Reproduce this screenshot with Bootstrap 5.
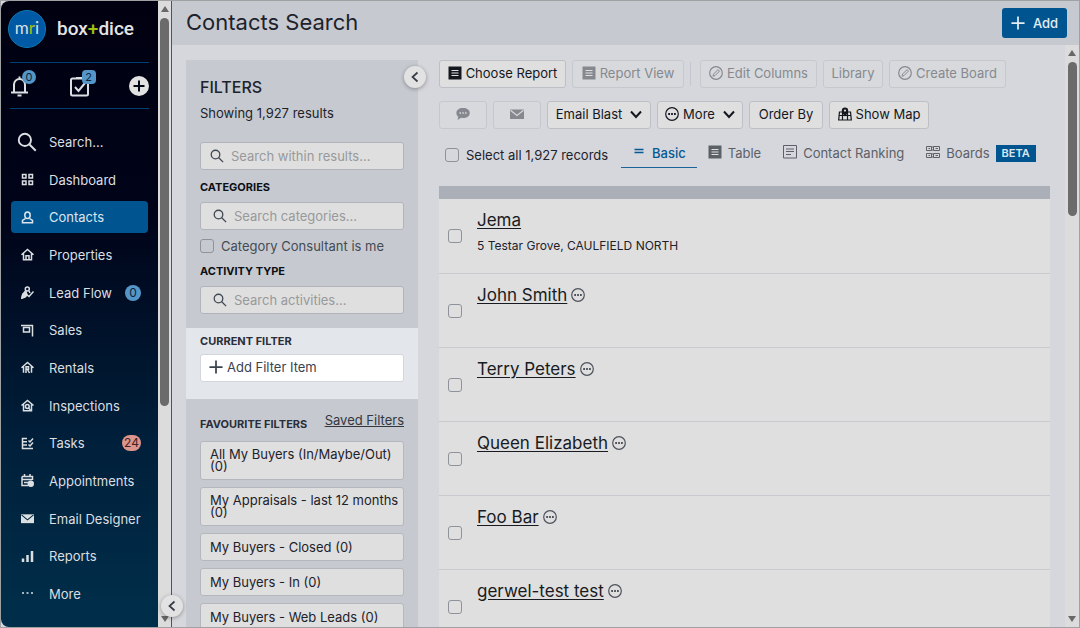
<!DOCTYPE html>
<html lang="en">
<head>
<meta charset="utf-8">
<meta name="viewport" content="width=device-width, initial-scale=1">
<title>Contacts Search</title>
<link rel="stylesheet" href="https://cdn.jsdelivr.net/npm/bootstrap@5.3.0/dist/css/bootstrap.min.css">
<style>
  :root { --brand: #005591; --ink: #1d222b; --page: #d5d7dc; --panel: #c6cad0; --field: #dfdfdf; }
  body { font-family: Inter, "Open Sans", sans-serif; font-size: 13px; line-height: 16px; color: var(--ink); background: var(--page); }
  svg { fill: none; stroke: currentColor; stroke-width: 1.5; flex: none; display: block; }
  .ico { width: 14px; height: 14px; }
  .heavy { stroke-width: 2; }
  .fine { stroke-width: 1; }
  .shell { border: 1px solid #a0a1a3; }

  /* Sidebar */
  .side { width: 157px; background: linear-gradient(#000010 0, #000419 35%, #001f3a 70%, #002f4b); color: #dcdfe2; border-radius: 8px 0 0 8px; }
  .side a { color: inherit; text-decoration: none; }
  .brand { height: 61px; padding: 0 7px 6px; gap: 11px; }
  .brand-disc { width: 38px; height: 38px; border-radius: 50%; background: #0059a5; border: 1px solid #0d79b5; font: 17px/34px Lato, sans-serif; text-align: center; }
  .brand-name { font: 500 19px/24px Roboto, sans-serif; color: #e4e4e4; }
  .lime { color: #a2bf12; }
  .quick { margin: 0 9px; height: 47px; border-top: 1px solid #003f73; border-bottom: 1px solid #003f73; }
  .quick a { position: relative; }
  .bubble { background: #5596c8; color: #0d2338; font-size: 11px; line-height: 14px; min-width: 14px; height: 14px; text-align: center; }
  .quick .bubble { position: absolute; left: 12px; top: -5px; }
  .side-menu { padding: 17px 10px; }
  .side-menu a { height: 32px; border-radius: 4px; padding: 0 7px 0 10px; }
  .side-menu a.active { background: var(--brand); color: #dde6ee; }
  .glyph { width: 28px; }
  .glyph svg { width: 13px; height: 13px; }
  .glyph .lens { width: 20px; height: 20px; margin-left: -4px; }
  .glyph .bars { stroke-width: 2.5; }
  .glyph .envelope { --fold: #00253f; }
  .side-menu .bubble { line-height: 16px; min-width: 16px; height: 16px; font-size: 12px; }
  .side-menu .alerting { background: #dc958c; color: #44201d; padding: 0 2px; }

  /* Scroll rails */
  .rail { width: 14px; background: #dcdcdc; color: #686868; padding: 5px 0; }
  .rail svg { width: 8px; height: 6px; fill: currentColor; stroke: none; }
  .rail i { width: 9px; border-radius: 5px; background: #6b6b6b; margin-top: 6px; }
  .rail-left { border-right: 1px solid #50535a; }
  .rail-left i { height: 63%; }
  .rail-right i { height: 27%; }
  .round { position: absolute; width: 22px; height: 22px; border-radius: 50%; border: 0; padding: 0; background: #e2e2e2; box-shadow: 0 1px 4px #0005; color: #363c45; z-index: 2; }
  .round svg { width: 12px; height: 12px; margin: auto; stroke-width: 1.7; }
  .round-side { right: -11px; bottom: 10px; }
  .round-panel { right: -8px; top: 6px; }

  /* Header */
  .top { height: 44px; background: var(--panel); padding: 0 12px 0 14px; }
  .top h1 { font-size: 22px; line-height: 26px; font-weight: 400; margin: 0 0 2px; }
  .btn { --bs-btn-font-size: 13px; --bs-btn-line-height: 16px; --bs-btn-border-radius: 3px; }
  .btn-add { --bs-btn-color: #e4edf4; --bs-btn-bg: var(--brand); --bs-btn-hover-bg: #00477a; --bs-btn-hover-color: #fff; --bs-btn-padding-x: 6px; font-weight: 500; width: 65px; height: 30px; }

  /* Filters */
  .filters-wrap { padding: 15px 12px 0 14px; }
  .filters { width: 232px; background: var(--panel); padding-top: 18px; }
  .filters .block { padding: 0 14px; }
  .filters .search-block { padding-bottom: 14px; }
  .filters h2 { font-size: 16px; line-height: 18px; font-weight: 500; margin: 0 0 9px; }
  .filters h3 { font-size: 11px; line-height: 14px; font-weight: 700; margin: 0; color: #0c0f14; }
  .seek { height: 28px; background: var(--field); border: 1px solid #b1b5bb; border-radius: 3px; padding: 0 9px; gap: 7px; color: #414954; }
  .seek.inset { padding-left: 12px; }
  .seek input { border: 0; outline: 0; background: none; min-width: 0; padding: 0; width: 100%; font-size: 13px; line-height: 16px; }
  .seek input::placeholder { color: #98999b; }
  .results-seek { margin: 21px 0 10px; }
  .filters .gap-under { margin-bottom: 8px; }
  .consultant { gap: 7px; margin: 8px 0 10px; color: #454b54; }
  .form-check-input { width: 14px; height: 14px; margin: 0; background-color: transparent; border: 1px solid #8e939b; border-radius: 3px !important; flex: none; }
  .filters .lit { background: #e3e6eb; height: 71px; padding-top: 6px; }
  .lit h3, .fav h3 { color: #2a2e3a; }
  .lit h3 { margin-bottom: 6px; }
  .add-item { background: #fff; border: 1px solid #d2d6da; border-radius: 3px; height: 28px; padding: 0 8px 2px; gap: 4px; color: #39434e; }
  .fav-head { height: 32px; margin-bottom: 10px; }
  .saved { color: #33383f; line-height: 14px; margin-bottom: 4px; }
  .fav-list { gap: 7px; }
  .fav-item { background: var(--field); border: 1px solid #b4b8be; border-radius: 3px; padding: 6px 4px 7px 9px; line-height: 12px; text-align: left; color: var(--ink); width: 100%; min-height: 28px; }

  /* Toolbar */
  .content { padding: 15px 15px 0 9px; }
  .tool-row { gap: 6px; }
  .second { margin-top: 13px; }
  .tool { --bs-btn-color: #14181e; --bs-btn-bg: #dfdfdf; --bs-btn-border-color: #bcc0c6; --bs-btn-disabled-color: #85898f; --bs-btn-disabled-bg: #d8d9dc; --bs-btn-disabled-border-color: #c5c8cd; --bs-btn-disabled-opacity: 1; height: 28px; padding: 3px 5px 5px; display: flex; align-items: center; justify-content: center; gap: 4px; white-space: nowrap; flex: none; }
  .tool .chev { width: 12px; height: 12px; margin-left: 4px; stroke-width: 2; }
  .w-5 { width: 48px; } .w-6 { width: 60px; } .w-7 { width: 74px; } .w-8 { width: 86px; } .w-9 { width: 100px; } .w-10 { width: 104px; }
  .w-11 { width: 112px; } .w-12 { width: 117px; } .w-13 { width: 127px; }
  .split { width: 1px; height: 24px; background: #c3c6cc; margin-right: 3px; }
  .view-row { height: 57px; padding-top: 8px; }
  .select-all { gap: 7px; width: 182px; height: 36px; padding-left: 6px; white-space: nowrap; flex: none; }
  .views .nav-link { padding: 8px 11px 0; height: 31px; display: flex; gap: 6px; color: #5c6067; font-size: 13px; line-height: 16px; border-bottom: 1px solid transparent; border-radius: 0; white-space: nowrap; }
  .views .nav-link.active { color: #075a96; font-weight: 500; border-color: #1a639b; }
  .beta { background: var(--brand); color: #d9e5ef; font-size: 11px; font-weight: 600; line-height: 17px; padding: 0 6px; height: 17px; }

  /* Results */
  .results { background: var(--field); }
  .results thead th { height: 13px; padding: 0; background: #abafb8; }
  .results td { height: 74px; padding: 0; border-bottom: 1px solid #c8cacf; vertical-align: top; }
  .results tr > td:first-child { width: 38px; padding: 30px 0 0 9px; }
  .results tr > td:last-child { padding-top: 11px; }
  .results .form-check-input { display: block; }
  .person { font-size: 17px; line-height: 20px; color: #181b22; text-underline-offset: 2px; }
  .more { border: 0; background: none; padding: 0; color: #4d535c; }
  .person-line { gap: 4px; }
  .address { margin-top: 8px; font-size: 12px; }
</style>
</head>
<body>
<svg width="0" height="0" class="position-absolute" aria-hidden="true">
  <symbol id="search" viewBox="0 0 16 16"><circle cx="6.3" cy="6.3" r="4.9"/><path d="M10 10l5 5"/></symbol>
  <symbol id="plus" viewBox="0 0 16 16"><path d="M8 .5v15M.5 8h15" stroke-width="2"/></symbol>
  <symbol id="left" viewBox="0 0 12 12"><path d="M8.500 1.500L3.500 6l5 4.500"/></symbol>
  <symbol id="down" viewBox="0 0 12 12"><path d="M1 3.500L6 9l5-5.500"/></symbol>
  <symbol id="up-tri" viewBox="0 0 8 6"><path d="M4 0l4 6H0z"/></symbol>
  <symbol id="down-tri" viewBox="0 0 8 6"><path d="M4 6l4-6H0z"/></symbol>
  <symbol id="report" viewBox="0 0 14 14"><path d="M.5.5h13v13H.5z" fill="currentColor" stroke="none"/><path d="M3.500 4.500h7M3.500 7h7M3.500 9.500h7" stroke="#dfdfdf" stroke-width="1.200"/></symbol>
  <symbol id="edit" viewBox="0 0 14 14"><circle cx="7" cy="7" r="6.300" stroke-width="1.200"/><path d="M4 10.200l.5-2L9 3.600l1.500 1.500L6 9.600z" stroke-width="1"/></symbol>
  <symbol id="dots" viewBox="0 0 14 14"><circle cx="7" cy="7" r="6.300" stroke-width="1.200"/><path d="M3.200 7h1.800M6.100 7h1.800M9 7h1.800" stroke-width="1.800"/></symbol>
  <symbol id="mail" viewBox="0 0 14 14"><path d="M0 2.500h14v9.500H0z" fill="currentColor" stroke="none"/><path d="M.5 3.200L7 8.500l6.500-5.300" stroke="var(--fold,#d8d9dc)" stroke-width="1.100"/></symbol>
</svg>

<div class="shell d-flex vh-100 overflow-hidden">
  <div class="d-flex position-relative flex-shrink-0">
    <aside class="side d-flex flex-column">
      <a href="#" class="brand d-flex align-items-center flex-shrink-0">
        <span class="brand-disc">m<span class="lime">r</span>i</span>
        <span class="brand-name">box<span class="lime">+</span>dice</span>
      </a>
      <div class="quick d-flex align-items-center justify-content-between flex-shrink-0">
        <a href="#" aria-label="Notifications"><svg class="heavy" width="20" height="22" viewBox="0 0 20 22"><path d="M1 17.500h17M4 17V9.500a5.500 5.500 0 0 1 11 0V17M9.500 4V1.500"/><path d="M7.500 20.500h4"/></svg><span class="bubble rounded-circle">0</span></a>
        <a href="#" aria-label="Tasks due"><svg class="heavy" width="20" height="22" viewBox="0 0 20 22"><rect x="1" y="3.500" width="17" height="17" rx="1.500"/><path d="M5 12l3.500 4 6.500-8M6 3h7"/></svg><span class="bubble rounded-1">2</span></a>
        <a href="#" aria-label="Create"><svg width="20" height="20" viewBox="0 0 20 20"><circle cx="10" cy="10" r="10" fill="#e2e2e2" stroke="none"/><path d="M10 4.500v11M4.500 10h11" stroke="#000614" stroke-width="2"/></svg></a>
      </div>
      <nav class="side-menu d-flex flex-column flex-grow-1 justify-content-between">
        <a href="#" class="d-flex align-items-center"><span class="glyph"><svg class="lens"><use href="#search"/></svg></span>Search...</a>
        <a href="#" class="d-flex align-items-center"><span class="glyph"><svg viewBox="0 0 13 13"><path d="M1.500 1.500H5V5H1.500zM8 1.500h3.500V5H8zM1.500 8H5v3.500H1.500zM8 8h3.500v3.500H8z"/></svg></span>Dashboard</a>
        <a href="#" class="active d-flex align-items-center" aria-current="page"><span class="glyph"><svg viewBox="0 0 13 13"><ellipse cx="6.500" cy="4.300" rx="2.700" ry="3.300"/><path d="M4.500 7.500L1.500 9.500v2.200h10V9.500l-3-2"/></svg></span>Contacts</a>
        <a href="#" class="d-flex align-items-center"><span class="glyph"><svg viewBox="0 0 13 13"><path d="M.5 6.700l6-5.200 6 5.200M2.500 5.500v6.300h8V5.500M5 11.500V7.700h3v3.800"/></svg></span>Properties</a>
        <a href="#" class="d-flex align-items-center"><span class="glyph"><svg viewBox="0 0 13 13"><circle cx="6.300" cy="3" r="2"/><path d="M4.500 5L1.500 9 1 12l3-1 2-2 2 1.500 4.500-5M8 5l1 2"/><path d="M1 12l1-4 3-2 1 3z" fill="currentColor"/></svg></span><span class="flex-grow-1">Lead Flow</span><span class="bubble rounded-circle">0</span></a>
        <a href="#" class="d-flex align-items-center"><span class="glyph"><svg viewBox="0 0 13 13"><path d="M0 1.500h12M11.500 1v11.500M2.500 3.500h6v4.500h-6z"/></svg></span>Sales</a>
        <a href="#" class="d-flex align-items-center"><span class="glyph"><svg viewBox="0 0 13 13"><path d="M.5 6.700l6-5.200 6 5.200M2.500 5.500v6.300M10.500 5.500v6.300M5 12V5.800h2.500v2.500H5M6.500 8.500L8.500 12"/></svg></span>Rentals</a>
        <a href="#" class="d-flex align-items-center"><span class="glyph"><svg viewBox="0 0 13 13"><path d="M.5 6.500l6-5 6 5M2.500 5.500v6.300h8V5.500"/><circle cx="6.300" cy="7.500" r="1.900"/><path d="M7.500 9l2 2"/></svg></span>Inspections</a>
        <a href="#" class="d-flex align-items-center"><span class="glyph"><svg viewBox="0 0 13 13"><path d="M6 1.500H1.500v10H12M1.500 4.800H6M1.500 8H6M7.500 3.500l1.500 1.500 3-3.500M7.500 7.500L9 9l3-3.500"/></svg></span><span class="flex-grow-1">Tasks</span><span class="bubble alerting rounded-pill">24</span></a>
        <a href="#" class="d-flex align-items-center"><span class="glyph"><svg viewBox="0 0 13 13"><path d="M1 2.500h10.500V6M1 2.500v9h6M1 5.500h10M3.500 0v3M9 0v3M3 8.500h4"/><circle cx="9.800" cy="9.800" r="3.200" fill="currentColor" stroke="none"/></svg></span>Appointments</a>
        <a href="#" class="d-flex align-items-center"><span class="glyph"><svg class="envelope"><use href="#mail"/></svg></span>Email Designer</a>
        <a href="#" class="d-flex align-items-center"><span class="glyph"><svg class="bars" viewBox="0 0 13 13"><path d="M2 12V8.500M6.500 12V5M11 12V1"/></svg></span>Reports</a>
        <a href="#" class="d-flex align-items-center"><span class="glyph"><svg viewBox="0 0 13 13"><path d="M1 6h2M5.500 6h2M10 6h2"/></svg></span>More</a>
      </nav>
    </aside>
    <div class="rail rail-left d-flex flex-column align-items-center">
      <svg><use href="#up-tri"/></svg><i></i><svg class="mt-auto"><use href="#down-tri"/></svg>
    </div>
    <button type="button" class="round round-side" aria-label="Collapse menu"><svg><use href="#left"/></svg></button>
  </div>

  <div class="d-flex flex-column flex-grow-1 overflow-hidden">
    <header class="top d-flex align-items-center justify-content-between flex-shrink-0">
      <h1>Contacts Search</h1>
      <button type="button" class="btn btn-add d-flex align-items-center justify-content-center gap-2"><svg class="ico"><use href="#plus"/></svg>Add</button>
    </header>

    <div class="d-flex flex-grow-1 overflow-hidden">
      <main class="d-flex flex-grow-1 overflow-hidden">
        <div class="flex-shrink-0 overflow-hidden filters-wrap">
          <div class="filters position-relative h-100">
            <button type="button" class="round round-panel" aria-label="Collapse filters"><svg><use href="#left"/></svg></button>
            <section class="block search-block">
              <h2>FILTERS</h2>
              <p class="mb-0">Showing 1,927 results</p>
              <div class="seek d-flex align-items-center results-seek"><svg class="ico"><use href="#search"/></svg><input type="search" aria-label="Search within results" placeholder="Search within results..."></div>
              <h3 class="gap-under">CATEGORIES</h3>
              <div class="seek inset d-flex align-items-center"><svg class="ico"><use href="#search"/></svg><input type="search" aria-label="Search categories" placeholder="Search categories..."></div>
              <div class="d-flex align-items-center consultant"><input class="form-check-input" type="checkbox" id="consultant"><label for="consultant">Category Consultant is me</label></div>
              <h3 class="gap-under">ACTIVITY TYPE</h3>
              <div class="seek inset d-flex align-items-center"><svg class="ico"><use href="#search"/></svg><input type="search" aria-label="Search activities" placeholder="Search activities..."></div>
            </section>
            <section class="block lit">
              <h3>CURRENT FILTER</h3>
              <button type="button" class="add-item w-100 d-flex align-items-center"><svg class="ico"><use href="#plus"/></svg>Add Filter Item</button>
            </section>
            <section class="block fav">
              <div class="d-flex justify-content-between align-items-end fav-head"><h3>FAVOURITE FILTERS</h3><a href="#" class="saved">Saved Filters</a></div>
              <div class="d-grid fav-list">
                <button type="button" class="fav-item">All My Buyers (In/Maybe/Out) (0)</button>
                <button type="button" class="fav-item">My Appraisals - last 12 months (0)</button>
                <button type="button" class="fav-item">My Buyers - Closed (0)</button>
                <button type="button" class="fav-item">My Buyers - In (0)</button>
                <button type="button" class="fav-item">My Buyers - Web Leads (0)</button>
              </div>
            </section>
          </div>
        </div>

        <div class="content flex-grow-1 overflow-hidden">
          <div class="d-flex align-items-center tool-row">
            <button type="button" class="btn tool w-13"><svg class="ico"><use href="#report"/></svg>Choose Report</button>
            <button type="button" class="btn tool w-11" disabled><svg class="ico"><use href="#report"/></svg>Report View</button>
            <span class="split"></span>
            <button type="button" class="btn tool w-12" disabled><svg class="ico"><use href="#edit"/></svg>Edit Columns</button>
            <button type="button" class="btn tool w-6" disabled>Library</button>
            <button type="button" class="btn tool w-12" disabled><svg class="ico"><use href="#edit"/></svg>Create Board</button>
          </div>
          <div class="d-flex align-items-center tool-row second">
            <button type="button" class="btn tool w-5" disabled aria-label="Send SMS"><svg class="ico" viewBox="0 0 14 14"><path d="M7 1c4 0 6.800 2 6.800 5S11 11 7 11l-2-.2L1.500 13l.8-3.200C1 9 .4 7.500.4 6 .4 3 3 1 7 1z" fill="currentColor" stroke="none"/><path d="M3.500 6h1.500M6.300 6h1.500M9 6h1.500" stroke="#d8d9dc"/></svg></button>
            <button type="button" class="btn tool w-5" disabled aria-label="Send email"><svg class="ico"><use href="#mail"/></svg></button>
            <button type="button" class="btn tool w-10">Email Blast<svg class="chev"><use href="#down"/></svg></button>
            <button type="button" class="btn tool w-8"><svg class="ico"><use href="#dots"/></svg>More<svg class="chev"><use href="#down"/></svg></button>
            <button type="button" class="btn tool w-7">Order By</button>
            <button type="button" class="btn tool w-9"><svg class="ico" viewBox="0 0 14 14"><path d="M1.500 4.500L.7 13h12.600l-.8-8.500M1 8.500h12M4.500 4v9M9.500 4v9M1 5h3M10 5h3" stroke-width="1.200"/><path d="M7 9.500C5 7 3.800 5.500 3.800 3.700a3.200 3.200 0 0 1 6.400 0C10.200 5.500 9 7 7 9.500z" fill="currentColor" stroke="none"/><circle cx="7" cy="3.600" r="1.100" fill="#dfdfdf" stroke="none"/></svg>Show Map</button>
          </div>
          <div class="d-flex view-row">
            <div class="d-flex align-items-center select-all"><input class="form-check-input" type="checkbox" id="all"><label for="all">Select all 1,927 records</label></div>
            <nav class="nav views flex-nowrap">
              <a class="nav-link active" href="#"><svg class="ico" viewBox="0 0 14 14"><path d="M2.500 4.500h9M2.500 7.500h9"/></svg>Basic</a>
              <a class="nav-link" href="#"><svg class="ico"><use href="#report"/></svg>Table</a>
              <a class="nav-link" href="#"><svg class="ico fine" viewBox="0 0 14 14"><path d="M.5.5h13v12.500H.5zM3 4h8M3 6.500h8M3 9.500h5"/></svg>Contact Ranking</a>
              <a class="nav-link" href="#"><svg class="ico fine" viewBox="0 0 14 14"><path d="M.5 1.500h5v4h-5zM7.500 1.500h6v4h-6zM.5 8.500h5v4h-5zM7.500 8.500h6v4h-6zM2.500 3.500H4M9.500 3.500h2.500M2.500 10.500H4M9.500 10.500h2.500M5.500 2h2M5.500 5h2M5.500 9h2M5.500 12h2"/></svg>Boards<span class="beta">BETA</span></a>
            </nav>
          </div>
          <table class="results w-100">
            <thead><tr><th></th><th></th></tr></thead>
            <tbody>
              <tr><td><input class="form-check-input" type="checkbox" aria-label="Select Jema"></td><td><a href="#" class="person">Jema</a><div class="address">5 Testar Grove, CAULFIELD NORTH</div></td></tr>
              <tr><td><input class="form-check-input" type="checkbox" aria-label="Select John Smith"></td><td><div class="d-flex align-items-center person-line"><a href="#" class="person">John Smith</a><button type="button" class="more" aria-label="More"><svg class="ico"><use href="#dots"/></svg></button></div></td></tr>
              <tr><td><input class="form-check-input" type="checkbox" aria-label="Select Terry Peters"></td><td><div class="d-flex align-items-center person-line"><a href="#" class="person">Terry Peters</a><button type="button" class="more" aria-label="More"><svg class="ico"><use href="#dots"/></svg></button></div></td></tr>
              <tr><td><input class="form-check-input" type="checkbox" aria-label="Select Queen Elizabeth"></td><td><div class="d-flex align-items-center person-line"><a href="#" class="person">Queen Elizabeth</a><button type="button" class="more" aria-label="More"><svg class="ico"><use href="#dots"/></svg></button></div></td></tr>
              <tr><td><input class="form-check-input" type="checkbox" aria-label="Select Foo Bar"></td><td><div class="d-flex align-items-center person-line"><a href="#" class="person">Foo Bar</a><button type="button" class="more" aria-label="More"><svg class="ico"><use href="#dots"/></svg></button></div></td></tr>
              <tr><td><input class="form-check-input" type="checkbox" aria-label="Select gerwel-test test"></td><td><div class="d-flex align-items-center person-line"><a href="#" class="person">gerwel-test test</a><button type="button" class="more" aria-label="More"><svg class="ico"><use href="#dots"/></svg></button></div></td></tr>
            </tbody>
          </table>
        </div>
      </main>
      <div class="rail rail-right d-flex flex-column align-items-center">
        <svg><use href="#up-tri"/></svg><i></i><svg class="mt-auto"><use href="#down-tri"/></svg>
      </div>
    </div>
  </div>
</div>
<script src="https://cdn.jsdelivr.net/npm/bootstrap@5.3.0/dist/js/bootstrap.bundle.min.js"></script>
</body>
</html>
